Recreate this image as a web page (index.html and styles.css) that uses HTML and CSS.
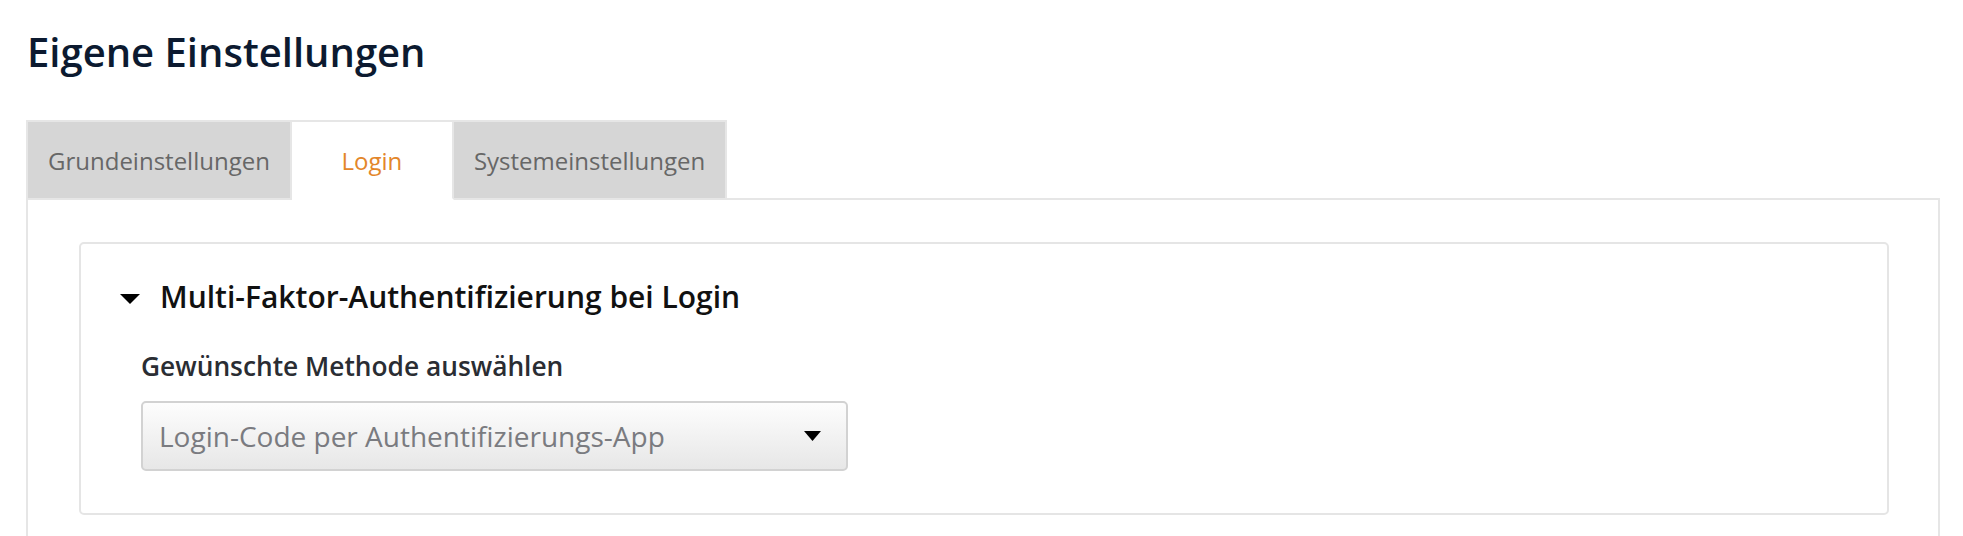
FILE: index.html
```html
<!DOCTYPE html>
<html lang="de">
<head>
<meta charset="utf-8">
<title>Eigene Einstellungen</title>
<link rel="stylesheet" href="styles.css">
</head>
<body>
<div class="page">
  <h1 class="title">Eigene Einstellungen</h1>
  <div class="tabs">
    <div class="tab">Grundeinstellungen</div>
    <div class="tab active">Login</div>
    <div class="tab">Systemeinstellungen</div>
  </div>
  <div class="panel">
    <div class="card">
      <div class="toggle">
        <svg class="caret" width="20" height="10" viewBox="0 0 20 10"><path d="M0 0 H20 L10 10 Z" fill="#000"/></svg>
        <span class="toggle-text">Multi-Faktor-Authentifizierung bei Login</span>
      </div>
      <div class="field">
        <div class="label">Gewünschte Methode auswählen</div>
        <div class="select">
          <span class="select-text">Login-Code per Authentifizierungs-App</span>
          <svg class="select-arrow" width="17" height="10" viewBox="0 0 17 10"><path d="M0 0 H17 L8.5 10 Z" fill="#000"/></svg>
        </div>
      </div>
    </div>
  </div>
</div>
</body>
</html>
```

FILE: styles.css
```css
html, body {
  margin: 0;
  padding: 0;
  background: #fff;
}

body {
  font-family: "Open Sans", "Liberation Sans", sans-serif;
  overflow: hidden;
}

.page {
  padding: 29px 23px 0 26px;
}

.title {
  margin: 0;
  font-size: 40px;
  line-height: 46px;
  font-weight: 600;
  color: #0c1a30;
  padding-left: 1px;
}

.tabs {
  display: flex;
  margin-top: 45px;
  border-bottom: 2px solid #e6e6e6;
}

.tab {
  box-sizing: border-box;
  height: 80px;
  margin-bottom: -2px;
  padding: 0 20px;
  display: flex;
  align-items: center;
  justify-content: center;
  background: #d6d6d6;
  border-top: 2px solid #e6e6e6;
  border-right: 2px solid #e6e6e6;
  border-bottom: 2px solid #e6e6e6;
  font-size: 24px;
  color: #676767;
}

.tab:first-child {
  border-left: 2px solid #e6e6e6;
}

.tab.active {
  min-width: 162px;
  background: #fff;
  color: #e3862a;
  border-bottom-color: #fff;
}

.panel {
  border-left: 2px solid #e6e6e6;
  border-right: 2px solid #e6e6e6;
  padding: 42px 49px 21px 51px;
}

.card {
  border: 2px solid #e5e5e5;
  border-radius: 5px;
  padding: 33px 0 42px 39px;
}

.toggle {
  display: flex;
  align-items: center;
  height: 40px;
  gap: 20px;
}

.caret {
  display: block;
  margin-top: 3px;
}

.toggle-text {
  font-size: 30px;
  font-weight: 600;
  color: #111;
  line-height: 40px;
}

.field {
  margin-top: 32px;
  padding-left: 21px;
}

.label {
  font-size: 26.3px;
  font-weight: 600;
  line-height: 34px;
  color: #2a2d33;
}

.select {
  box-sizing: border-box;
  margin-top: 18px;
  width: 707px;
  height: 70px;
  border: 2px solid #d2d2d2;
  border-radius: 5px;
  background: linear-gradient(#fdfdfd, #e7e7e7);
  display: flex;
  align-items: center;
  justify-content: space-between;
  padding: 0 25px 0 16px;
}

.select-text {
  font-size: 28px;
  color: #7a7b80;
}

.select-arrow {
  display: block;
}
```
